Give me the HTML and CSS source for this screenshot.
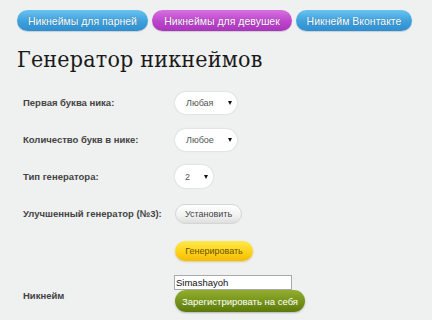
FILE: index.html
```html
<!DOCTYPE html>
<html lang="ru">
<head>
<meta charset="utf-8">
<link rel="stylesheet" href="styles.css">
</head>
<body>
<div class="page">
  <nav class="tabs">
    <a class="tab tab-blue tab-1">Никнеймы для парней</a>
    <a class="tab tab-pink tab-2">Никнеймы для девушек</a>
    <a class="tab tab-blue tab-3">Никнейм Вконтакте</a>
  </nav>
  <h1 class="title">Генератор никнеймов</h1>
  <div class="form">
    <div class="row">
      <div class="label">Первая буква ника:</div>
      <div class="select sel-wide"><span>Любая</span><i class="arrow"></i></div>
    </div>
    <div class="row">
      <div class="label">Количество букв в нике:</div>
      <div class="select sel-wide"><span>Любое</span><i class="arrow"></i></div>
    </div>
    <div class="row">
      <div class="label">Тип генератора:</div>
      <div class="select sel-narrow"><span>2</span><i class="arrow"></i></div>
    </div>
    <div class="row">
      <div class="label">Улучшенный генератор (№3):</div>
      <div class="btn btn-white">Установить</div>
    </div>
    <div class="row">
      <div class="label"></div>
      <div class="btn btn-yellow">Генерировать</div>
    </div>
    <div class="row row-nick">
      <div class="label label-nick">Никнейм</div>
      <div class="nick-col">
        <div class="input">Simashayoh</div>
        <div class="btn btn-green">Зарегистрировать на себя</div>
      </div>
    </div>
  </div>
</div>
</body>
</html>
```
FILE: styles.css
```css
html, body {
  margin: 0;
  padding: 0;
}
body {
  background: #eff0f0;
  font-family: "Liberation Sans", Arial, sans-serif;
  width: 432px;
  height: 320px;
  overflow: hidden;
}
.page {
  padding: 10px 0 0 17px;
}
.tabs {
  display: flex;
  gap: 4px;
}
.tab {
  display: flex;
  align-items: center;
  justify-content: center;
  height: 21px;
  border-radius: 11px;
  color: #fff;
  font-size: 10.5px;
  white-space: nowrap;
  text-shadow: 0 0 1px rgba(0,0,0,0.35);
  box-shadow: 0 1px 1px rgba(0,0,0,0.15);
}
.tab-blue {
  background: linear-gradient(#6ac3f0, #3d9fdc 55%, #2f8ed0);
}
.tab-pink {
  background: linear-gradient(#d671e0, #bd45cc 55%, #a935bc);
}
.tab-1 { width: 131px; }
.tab-2 { width: 140px; }
.tab-3 { width: 116px; }
.title {
  margin: 13px 0 0 0;
  font-family: "DejaVu Serif Condensed", "DejaVu Serif", serif;
  font-stretch: condensed;
  font-weight: normal;
  font-size: 23px;
  line-height: 30px;
  color: #1a1a1a;
  letter-spacing: 0.2px;
}
.form {
  margin-top: 10px;
  padding-left: 6px;
}
.row {
  display: flex;
  align-items: center;
  height: 37px;
}
.label {
  flex: none;
  width: 152px;
  font-size: 9.5px;
  font-weight: bold;
  color: #444;
  white-space: nowrap;
}
.select {
  display: flex;
  align-items: center;
  justify-content: space-between;
  height: 22px;
  box-sizing: border-box;
  padding: 0 5px 0 11px;
  background: #fff;
  border-radius: 11px;
  box-shadow: 0 0 2px rgba(0,0,0,0.18);
  font-size: 9px;
  color: #555;
}
.sel-wide { width: 62px; }
.sel-narrow { width: 38px; height: 23px; padding-left: 10px; }
.arrow {
  width: 0;
  height: 0;
  border-left: 2.5px solid transparent;
  border-right: 2.5px solid transparent;
  border-top: 4px solid #111;
}
.btn {
  display: flex;
  align-items: center;
  justify-content: center;
  box-sizing: border-box;
  border-radius: 11px;
  font-size: 9px;
  white-space: nowrap;
}
.btn-white {
  width: 67px;
  height: 20px;
  background: linear-gradient(#ffffff, #f1f1f1 60%, #dedede);
  border: 1px solid #d4d6d6;
  color: #444;
}
.btn-yellow {
  width: 78px;
  height: 20px;
  background: linear-gradient(#ffe94d, #fdd21a 55%, #f5bb04);
  color: #6b5200;
  box-shadow: 0 1px 2px rgba(150,110,0,0.3);
}
.row-nick {
  align-items: flex-end;
  height: 43px;
}
.label-nick {
  padding-bottom: 11px;
}
.nick-col {
  display: flex;
  flex-direction: column;
  margin-left: -1px;
}
.input {
  width: 118px;
  height: 15px;
  box-sizing: border-box;
  border: 1px solid #a9a9a9;
  background: #fff;
  font-size: 9.5px;
  line-height: 13px;
  padding-left: 1px;
  color: #111;
}
.btn-green {
  width: 130px;
  height: 22px;
  margin-left: 1px;
  background: linear-gradient(#93ad30, #75931a 55%, #5b780c);
  color: #fff;
  font-size: 9.5px;
  box-shadow: 0 1px 2px rgba(0,0,0,0.25);
}
```
